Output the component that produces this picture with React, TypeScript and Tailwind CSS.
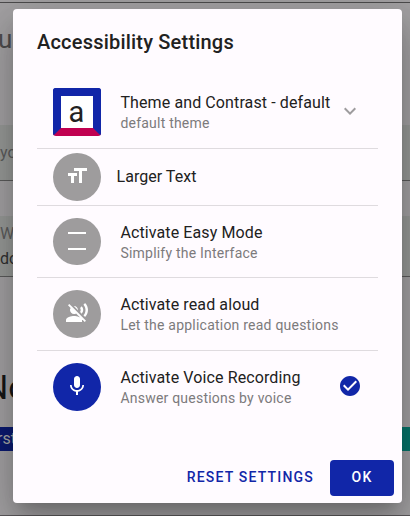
import type { ReactNode } from "react";
import { MdCheckCircle, MdExpandMore, MdFormatSize, MdMic, MdVoiceOverOff } from "react-icons/md";

function EasyModeIcon() {
  return (
    <svg className="mb-px" width="24" height="24" viewBox="0 0 24 24" fill="currentColor">
      <path d="M3 3h18v2H3zM3 19h18v2H3z" />
    </svg>
  );
}

function Circle({
  active = false,
  height = "h-12",
  children,
}: {
  active?: boolean;
  height?: string;
  children: ReactNode;
}) {
  return (
    <div
      className={`flex w-12 shrink-0 items-center justify-center rounded-full text-[24px] text-white ${height} ${
        active ? "bg-[#1126a8]" : "bg-[#9e9c9d]"
      }`}
    >
      {children}
    </div>
  );
}

function ThemeTile() {
  return (
    <div className="flex size-12 shrink-0 items-center justify-center rounded-[3px] border-8 border-[#1126a8] border-b-[#c00050] bg-white pr-px text-[29px] leading-8 text-[#212121]">
      a
    </div>
  );
}

function Labels({ title, sub }: { title: string; sub: string }) {
  return (
    <div className="ml-[19px] grow whitespace-nowrap pl-[0.4px]">
      <div className="text-[16px] leading-[22px] tracking-[0.11px] text-[#212121]">{title}</div>
      <div className="text-[14px] leading-[18px] tracking-[0.22px] text-[#7c7a7c]">{sub}</div>
    </div>
  );
}

function Backdrop() {
  return (
    <div className="flex h-[516px] flex-col overflow-hidden whitespace-nowrap bg-[#a3a1a3]">
      <div className="h-[3px] shrink-0 border-b border-[#4c4b4c]" />
      <div className="h-[122px] shrink-0 pt-[20px] text-[26px] leading-8 text-[#4d4c4d]">
        <div className="-ml-[2px]">ue</div>
      </div>
      <div className="h-[56px] shrink-0 border-b border-[#5b5b5b] bg-[#979997] pt-[16px] text-[16px] leading-6 text-[#5c5c5c]">yo</div>
      <div className="h-[35px] shrink-0" />
      <div className="h-[61px] shrink-0 border-b border-[#5b5b5b] bg-[#979997] pt-[6px] text-[16px] text-[#5c5c5c]">
        <div className="leading-6">W</div>
        <div className="pt-px leading-6 text-[#303030]">do</div>
      </div>
      <div className="h-[150px] shrink-0 pt-[88px] text-[34px] leading-[44px] text-[#171717]">
        <div className="-ml-[16px]">No</div>
      </div>
      <div className="flex h-6 shrink-0 justify-between bg-[#07746a] text-[16px] leading-6 text-[#aaa]">
        <div className="w-[200px] bg-[#0b1a70]">
          <div className="-ml-[3px]">rst</div>
        </div>
      </div>
      <div className="h-16 shrink-0" />
      <div className="h-px shrink-0 bg-[#5b585b]" />
    </div>
  );
}

export default function App() {
  return (
    <div className="relative h-[516px] w-[410px] overflow-hidden font-[Roboto,sans-serif]">
      <Backdrop />
      <div
        role="dialog"
        className="absolute left-[13px] top-[9px] flex h-[494px] w-[389px] flex-col rounded-[4px] bg-[#fffbff] shadow-[0_11px_15px_-7px_rgba(0,0,0,0.2),0_24px_38px_3px_rgba(0,0,0,0.14),0_9px_46px_8px_rgba(0,0,0,0.12)]"
      >
        <h2 className="h-[67px] pl-6 pt-[17px] text-[20px] font-medium leading-8 tracking-[0.2px] text-[#212121]">
          Accessibility Settings
        </h2>
        <div className="mx-6 divide-y divide-[#dfdbdf]">
          <div className="flex h-[73px] items-center pl-4 pr-4">
            <ThemeTile />
            <Labels title="Theme and Contrast - default" sub="default theme" />
            <MdExpandMore className="mb-[2px] size-6 text-[#9e9c9e]" />
          </div>
          <div className="flex h-[57px] items-center pl-4">
            <Circle>
              <MdFormatSize className="mb-[2px]" />
            </Circle>
            <div className="ml-[15.6px] text-[16px] leading-6 tracking-[0.02px] text-[#212121]">Larger Text</div>
          </div>
          <div className="flex h-[72px] items-center pl-4">
            <Circle height="h-[47px]">
              <EasyModeIcon />
            </Circle>
            <Labels title="Activate Easy Mode" sub="Simplify the Interface" />
          </div>
          <div className="flex h-[73px] items-center pl-4">
            <Circle>
              <MdVoiceOverOff className="mb-[2px]" />
            </Circle>
            <Labels title="Activate read aloud" sub="Let the application read questions" />
          </div>
          <div className="flex h-[72px] items-center pb-px pl-4 pr-4">
            <Circle active>
              <MdMic className="mb-[2px]" />
            </Circle>
            <Labels title="Activate Voice Recording" sub="Answer questions by voice" />
            <MdCheckCircle className="mb-[2px] size-6 text-[#1126a8]" />
          </div>
        </div>
        <div className="mt-auto flex items-center justify-end gap-4 pb-[7px] pr-2 text-[14px] font-medium tracking-[1.25px]">
          <button className="h-9 pb-[2px] tracking-[1.2px] text-[#1126a8]">RESET SETTINGS</button>
          <button className="h-9 w-16 rounded-[4px] bg-[#1126a8] pb-[2px] text-white">OK</button>
        </div>
      </div>
    </div>
  );
}
